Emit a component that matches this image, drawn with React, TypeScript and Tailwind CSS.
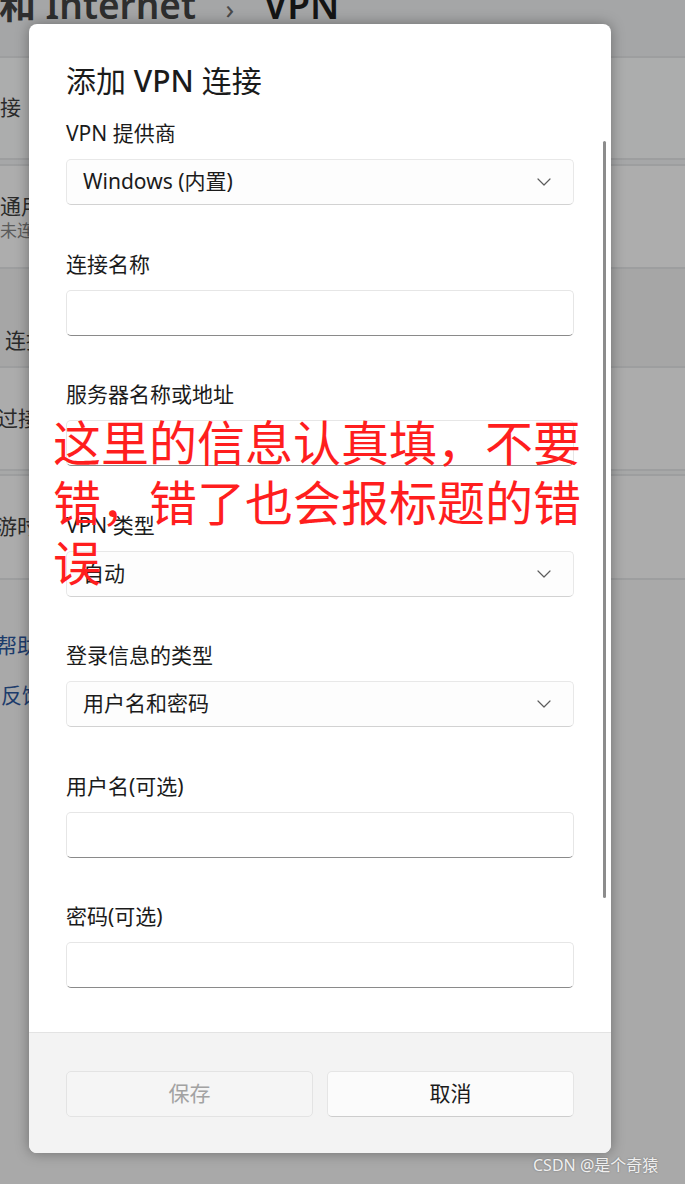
import React from "react";

const fields = [
    { label: "VPN 提供商", value: "Windows (内置)", select: true },
    { label: "连接名称", value: "", select: false },
    { label: "服务器名称或地址", value: "", select: false },
    { label: "VPN 类型", value: "自动", select: true },
    { label: "登录信息的类型", value: "用户名和密码", select: true },
    { label: "用户名(可选)", value: "", select: false },
    { label: "密码(可选)", value: "", select: false },
];

function Chevron() {
    return (
        <svg width="14" height="8" viewBox="0 0 14 8" fill="none" className="shrink-0">
            <path d="M1 1l6 6 6-6" stroke="#5c5c5c" strokeWidth="1.2" strokeLinecap="round" strokeLinejoin="round" />
        </svg>
    );
}

function Field({ label, value, select }: { label: string; value: string; select: boolean }) {
    return (
        <div className="flex flex-col">
            <div className="h-[28px] text-[21px] leading-[28px] text-[#1b1b1b]">{label}</div>
            {select ? (
                <div className="mt-[12px] flex h-[46px] items-center justify-between rounded-[5px] border border-[#e8e8e8] border-b-[#d2d2d2] bg-[#fdfdfd] pl-[16px] pr-[22px] text-[21px] text-[#1b1b1b]">
                    <span>{value}</span>
                    <Chevron />
                </div>
            ) : (
                <div className="mt-[12px] h-[46px] rounded-[5px] border border-[#e6e6e6] border-b-[#8a8a8a] bg-white" />
            )}
        </div>
    );
}

export default function App() {
    return (
        <div className="relative h-[1184px] w-[685px] overflow-hidden bg-[#a9a9a9] font-['Noto_Sans','Noto_Sans_CJK_SC',sans-serif]">

            {/* BACKGROUND SETTINGS PAGE */}
            <div className="flex flex-col">
                <div className="flex h-[56px] items-start bg-[#a5a6a7]">
                    <div className="ml-[-75px] mt-[-17px] whitespace-nowrap text-[37px] font-semibold leading-[44px] text-[#2e2e2e]">
                        网络和 Internet <span className="mx-[20px] text-[28px] font-normal text-[#4a4a4a]">›</span> <span className="text-[#151515]">VPN</span>
                    </div>
                </div>
                <div className="h-[2px] bg-[#9d9e9f]" />
                <div className="flex h-[100px] items-center bg-[#acadad]">
                    <span className="ml-[-21px] text-[21px] text-[#2a2a2a]">连接</span>
                </div>
                <div className="h-[2px] bg-[#9d9e9f]" />
                <div className="h-[4px] bg-[#a6a7a8]" />
                <div className="h-[2px] bg-[#9d9e9f]" />
                <div className="flex h-[101px] flex-col justify-center bg-[#adadad] pt-[2px]">
                    <span className="text-[21px] leading-[26px] text-[#2a2a2a]">通用</span>
                    <span className="text-[17px] leading-[24px] text-[#5b5b5b]">未连接</span>
                </div>
                <div className="h-[2px] bg-[#9d9e9f]" />
                <div className="flex h-[97px] items-end bg-[#a6a6a6] pb-[10px]">
                    <span className="ml-[5px] text-[21px] text-[#2a2a2a]">连接</span>
                </div>
                <div className="h-[2px] bg-[#9d9e9f]" />
                <div className="flex h-[101px] items-center bg-[#acacac]">
                    <span className="ml-[-3px] text-[21px] text-[#2a2a2a]">过接</span>
                </div>
                <div className="h-[2px] bg-[#9d9e9f]" />
                <div className="h-[3px] bg-[#a7a8a8]" />
                <div className="h-[2px] bg-[#9d9e9f]" />
                <div className="flex h-[102px] items-center bg-[#acacac]">
                    <span className="ml-[-4px] text-[21px] text-[#2a2a2a]">游时</span>
                </div>
                <div className="h-[2px] bg-[#9d9e9f]" />
                <div className="flex flex-col gap-[24px] pt-[52px]">
                    <span className="ml-[-4px] text-[21px] leading-[26px] text-[#1d3c6c]">帮助</span>
                    <span className="ml-[1px] text-[21px] leading-[26px] text-[#1d3c6c]">反馈</span>
                </div>
            </div>

            {/* DIALOG */}
            <div className="absolute left-[29px] top-[24px] flex h-[1129px] w-[582px] flex-col overflow-hidden rounded-[8px] bg-white shadow-[0_0_14px_rgba(0,0,0,0.35)]">
                <div className="relative h-[1008px] px-[37px] pt-[37px]">
                    <h1 className="text-[30px] font-normal leading-[40px] text-[#1b1b1b]">
                        添加 <span className="font-medium">VPN</span> 连接
                    </h1>
                    <div className="mt-[18px] flex flex-col gap-[44.5px]">
                        {fields.map((f) => (
                            <Field key={f.label} {...f} />
                        ))}
                    </div>
                    <div className="absolute left-[574px] top-[117px] h-[757px] w-[3px] rounded-full bg-[#8c8c8c]" />
                </div>
                <div className="flex flex-1 gap-[14px] border-t border-[#e3e3e3] bg-[#f3f3f3] px-[37px] pt-[38px]">
                    <div className="flex h-[46px] flex-1 items-center justify-center rounded-[5px] border border-[#e3e3e3] bg-[#f5f5f5] text-[21px] text-[#a2a2a2]">
                        保存
                    </div>
                    <div className="flex h-[46px] flex-1 items-center justify-center rounded-[5px] border border-[#e5e5e5] border-b-[#cdcdcd] bg-[#fbfbfb] text-[21px] text-[#1b1b1b]">
                        取消
                    </div>
                </div>
            </div>

            {/* ANNOTATION */}
            <div className="absolute left-[53px] top-[410px] w-[535px] font-['Noto_Sans_CJK_SC',sans-serif] text-[48px] leading-[60px] text-[#ff1e1e]">
                这里的信息认真填，不要错，错了也会报标题的错误
            </div>

            {/* WATERMARK */}
            <div className="absolute left-[533px] top-[1153px] text-[16px] leading-[24px] text-[#f0f0f0] [text-shadow:0_0_2px_rgba(0,0,0,0.35)]">
                CSDN @是个奇猿
            </div>
        </div>
    );
}
